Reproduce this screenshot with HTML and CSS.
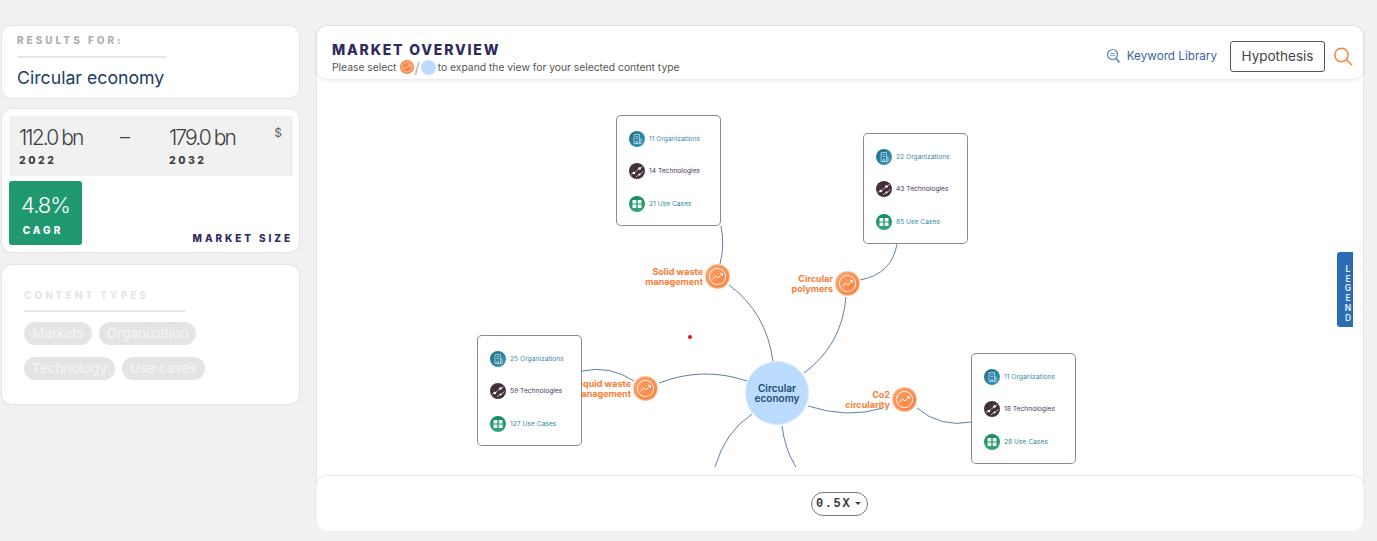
FILE: index.html
```html
<!DOCTYPE html>
<html lang="en">
  <head>
    <meta charset="UTF-8" />
    <meta name="viewport" content="width=device-width, initial-scale=1.0" />
    <title>Market Overview</title>
    <link rel="stylesheet" href="styles.css">
  </head>
  <body>
    <svg class="defs" width="0" height="0">
      <symbol id="trend" viewBox="0 0 24 24">
        <circle cx="12" cy="12" r="8.5" fill="none" stroke="#fff" stroke-width="1"/>
        <path d="M6.5 15 L10 11.5 L12.5 13.5 L17 9 M14.5 8.8 H17.2 V11.5" fill="none" stroke="#fff" stroke-width="1"/>
      </symbol>
      <symbol id="org" viewBox="0 0 16 16">
        <path d="M5 3.5 H10.5 V12.5 H5 Z M6.5 5.5 H9 M6.5 7.5 H9 M10.5 8 H12 V12.5 H10.5 M7 12.5 V10.5 H8.5 V12.5" fill="none" stroke="#cfe8f0" stroke-width=".7"/>
      </symbol>
      <symbol id="tech" viewBox="0 0 16 16">
        <path d="M2 11.5 C4 9.5 5.5 10.5 7 8.5 C8.5 6.5 10 6 13.5 3.5 M7 14 C9 11.5 11 12 14.5 8.5" fill="none" stroke="#e6dfe6" stroke-width=".8"/>
        <circle cx="4.8" cy="10" r="1.3" fill="#fff"/>
        <circle cx="10.5" cy="5.5" r="1.3" fill="#fff"/>
        <circle cx="10.5" cy="11.5" r="1" fill="#fff"/>
      </symbol>
      <symbol id="cases" viewBox="0 0 16 16">
        <path d="M3.5 4 H7.3 V7.4 H3.5 Z M8.7 4 H12.5 V7.4 H8.7 Z M3.5 8.6 H7.3 V12 H3.5 Z M8.7 8.6 H12.5 V12 H8.7 Z" fill="#f2fbf7"/>
      </symbol>
    </svg>

    <div class="sidebar">
      <div class="card results-card">
        <div class="eyebrow">RESULTS FOR:</div>
        <div class="results-term">Circular economy</div>
      </div>

      <div class="card market-card">
        <div class="size-band">
          <div>
            <div class="size-value">112.0 bn</div>
            <div class="size-year">2022</div>
          </div>
          <div class="size-dash">–</div>
          <div>
            <div class="size-value">179.0 bn</div>
            <div class="size-year">2032</div>
          </div>
          <div class="size-unit">$</div>
        </div>
        <div class="size-bottom">
          <div class="cagr">
            <div class="cagr-value">4.8%</div>
            <div class="cagr-label">CAGR</div>
          </div>
          <div class="market-label">MARKET SIZE</div>
        </div>
      </div>

      <div class="card types-card">
        <div class="types-title">CONTENT TYPES</div>
        <div class="chips">
          <span class="chip">Markets</span>
          <span class="chip">Organization</span>
          <span class="chip">Technology</span>
          <span class="chip">Use cases</span>
        </div>
      </div>
    </div>

    <div class="main">
      <div class="main-header">
        <div>
          <div class="main-title">MARKET OVERVIEW</div>
          <div class="main-sub">
            Please select
            <svg class="mini-topic" viewBox="0 0 24 24"><use href="#trend"/></svg>
            <span class="mini-slash">/</span>
            <span class="mini-center"></span>
            to expand the view for your selected content type
          </div>
        </div>
        <div class="header-tools">
          <a class="keyword-link">
            <svg width="15" height="16" viewBox="0 0 15 16">
              <circle cx="6.5" cy="6.5" r="5" fill="none" stroke="#5b86bd" stroke-width="1.2"/>
              <path d="M4 5.5 H9 M4 7.5 H9" stroke="#8fa9cc" stroke-width="1"/>
              <path d="M10 10.5 L13.5 14.5" stroke="#5b86bd" stroke-width="1.6"/>
            </svg>
            Keyword Library
          </a>
          <button class="hypothesis-btn">Hypothesis</button>
          <svg class="search-icon" width="20" height="20" viewBox="0 0 20 20">
            <circle cx="8.5" cy="8" r="6.7" fill="none" stroke="#f58439" stroke-width="1.5"/>
            <path d="M13.5 12.8 L19 18.2" stroke="#f58439" stroke-width="1.5"/>
          </svg>
        </div>
      </div>

      <div class="map">
        <svg class="links" viewBox="317 79 1046 397" width="1046" height="397">
          <path d="M721 226 Q725 245 720 264"/>
          <path d="M729 285 Q766 312 773 361"/>
          <path d="M846 297 Q842 345 804 373"/>
          <path d="M860 280 Q892 274 897 244"/>
          <path d="M659 383 Q703 366 747 381"/>
          <path d="M582 371 Q610 365 634 381"/>
          <path d="M808 406 Q848 419 883 408"/>
          <path d="M917 408 Q940 428 972 422"/>
          <path d="M752 414 Q725 432 715 467"/>
          <path d="M782 426 Q785 450 796 467"/>
        </svg>

        <div class="topic topic-solid">
          <span class="topic-label">Solid waste<br>management</span>
          <span class="topic-dot"><svg viewBox="0 0 24 24"><use href="#trend"/></svg></span>
        </div>
        <div class="topic topic-polymers">
          <span class="topic-label">Circular<br>polymers</span>
          <span class="topic-dot"><svg viewBox="0 0 24 24"><use href="#trend"/></svg></span>
        </div>
        <div class="topic topic-liquid">
          <span class="topic-label">Liquid waste<br>management</span>
          <span class="topic-dot"><svg viewBox="0 0 24 24"><use href="#trend"/></svg></span>
        </div>
        <div class="topic topic-co2">
          <span class="topic-label">Co2<br>circularity</span>
          <span class="topic-dot"><svg viewBox="0 0 24 24"><use href="#trend"/></svg></span>
        </div>

        <div class="center-node">Circular economy</div>
        <div class="red-dot"></div>

        <div class="stat-box box-solid">
          <div class="stat-row stat-org"><svg class="stat-icon"><use href="#org"/></svg>11 Organizations</div>
          <div class="stat-row stat-tech"><svg class="stat-icon"><use href="#tech"/></svg>14 Technologies</div>
          <div class="stat-row stat-cases"><svg class="stat-icon"><use href="#cases"/></svg>21 Use Cases</div>
        </div>
        <div class="stat-box box-polymers">
          <div class="stat-row stat-org"><svg class="stat-icon"><use href="#org"/></svg>22 Organizations</div>
          <div class="stat-row stat-tech"><svg class="stat-icon"><use href="#tech"/></svg>43 Technologies</div>
          <div class="stat-row stat-cases"><svg class="stat-icon"><use href="#cases"/></svg>85 Use Cases</div>
        </div>
        <div class="stat-box box-liquid">
          <div class="stat-row stat-org"><svg class="stat-icon"><use href="#org"/></svg>25 Organizations</div>
          <div class="stat-row stat-tech"><svg class="stat-icon"><use href="#tech"/></svg>59 Technologies</div>
          <div class="stat-row stat-cases"><svg class="stat-icon"><use href="#cases"/></svg>127 Use Cases</div>
        </div>
        <div class="stat-box box-co2">
          <div class="stat-row stat-org"><svg class="stat-icon"><use href="#org"/></svg>11 Organizations</div>
          <div class="stat-row stat-tech"><svg class="stat-icon"><use href="#tech"/></svg>18 Technologies</div>
          <div class="stat-row stat-cases"><svg class="stat-icon"><use href="#cases"/></svg>28 Use Cases</div>
        </div>

        <div class="legend-tab">LEGEND</div>
      </div>

      <div class="main-footer">
        <div class="zoom-select">0.5X<span class="zoom-caret"></span></div>
      </div>
    </div>
  </body>
</html>
```

FILE: styles.css
```css
html, body {
  height: 100%;
}

body {
  margin: 0;
  height: 541px;
  box-sizing: border-box;
  padding: 26px 14px 10px 2px;
  display: flex;
  gap: 18px;
  overflow: hidden;
  background: #f1f1f1;
  font-family: Inter, "Open Sans", sans-serif;
}

.defs {
  position: absolute;
}

.sidebar {
  width: 297px;
  flex: none;
}

.card {
  background: #fff;
  border-radius: 10px;
  box-shadow: 0 0 0 1px #e6e6e6;
}

/* results */
.results-card {
  height: 72px;
  box-sizing: border-box;
  padding: 8px 15px 0;
  margin-bottom: 11px;
}

.eyebrow {
  width: 149px;
  height: 22px;
  border-bottom: 2px solid #e6e6e6;
  font-size: 10px;
  font-weight: 800;
  letter-spacing: 3px;
  color: #b0b0b0;
}

.results-term {
  margin-top: 9px;
  font-size: 17.7px;
  color: #1d3b63;
}

/* market size */
.market-card {
  height: 143px;
  box-sizing: border-box;
  padding: 7px 6px 7px 7px;
  margin-bottom: 13px;
}

.size-band {
  height: 60px;
  box-sizing: border-box;
  padding: 9px 11px 0 10px;
  display: grid;
  grid-template-columns: 101px 49px 1fr auto;
  background: #f1f1f1;
  color: #3f3f3f;
}

.size-value {
  font-size: 21px;
  font-weight: 300;
  letter-spacing: -1.9px;
  line-height: 25px;
}

.size-year {
  margin-top: 4px;
  font-size: 10.5px;
  font-weight: 800;
  letter-spacing: 2.5px;
}

.size-dash {
  font-size: 20px;
  font-weight: 300;
  line-height: 25px;
}

.size-unit {
  font-size: 12px;
  color: #666;
}

.size-bottom {
  margin-top: 5px;
  display: flex;
  justify-content: space-between;
  align-items: flex-end;
}

.cagr {
  width: 73px;
  height: 64px;
  box-sizing: border-box;
  padding-top: 11px;
  text-align: center;
  border-radius: 3px;
  background: #219970;
  color: #fff;
}

.cagr-value {
  font-size: 22px;
  font-weight: 300;
  letter-spacing: -1px;
  line-height: 26px;
}

.cagr-label {
  margin-top: 6px;
  padding-right: 5px;
  font-size: 10px;
  font-weight: 800;
  letter-spacing: 3px;
}

.market-label {
  padding-bottom: 1px;
  font-size: 10px;
  font-weight: 800;
  letter-spacing: 2.9px;
  color: #2f2a5e;
}

/* content types */
.types-card {
  height: 139px;
  box-sizing: border-box;
  padding: 24px 22px 0;
}

.types-title {
  width: 161px;
  height: 21px;
  border-bottom: 2px solid #e6e6e6;
  font-size: 10px;
  font-weight: 800;
  letter-spacing: 3px;
  color: #e6e6e6;
}

.chips {
  width: 186px;
  margin-top: 10px;
  display: flex;
  flex-wrap: wrap;
  gap: 12px 7px;
}

.chip {
  height: 23px;
  padding: 0 8px;
  border-radius: 12px;
  background: #e4e4e4;
  color: #f6f6f6;
  font-size: 13.6px;
  line-height: 23px;
}

/* main panel */
.main {
  width: 1046px;
  height: 505px;
  flex: none;
  display: flex;
  flex-direction: column;
  border-radius: 10px;
  background: #fff;
  box-shadow: 0 0 0 1px #e6e6e6;
}

.main-header {
  position: relative;
  z-index: 2;
  height: 53px;
  flex: none;
  box-sizing: border-box;
  padding: 15px 10px 0 15px;
  display: flex;
  justify-content: space-between;
  border-radius: 10px;
  background: #fff;
  box-shadow: 0 1px 4px rgba(0, 0, 0, 0.12);
}

.main-title {
  font-size: 14px;
  font-weight: 800;
  letter-spacing: 1.8px;
  line-height: 18px;
  color: #2f2a5e;
}

.main-sub {
  display: flex;
  align-items: center;
  height: 14px;
  margin-top: 1px;
  font-size: 10.3px;
  color: #555;
}

.mini-topic {
  width: 14px;
  height: 14px;
  margin-left: 4px;
  border-radius: 50%;
  background: #f8853f;
}

.mini-slash {
  font-size: 15px;
  font-weight: 300;
  color: #999;
}

.mini-center {
  width: 15px;
  height: 15px;
  margin: 0 2px 0 1px;
  border-radius: 50%;
  background: #bbdcff;
}

.header-tools {
  display: flex;
  align-items: flex-start;
}

.keyword-link {
  display: flex;
  align-items: center;
  gap: 6px;
  height: 32px;
  margin-top: -1px;
  margin-right: 13px;
  font-size: 11.7px;
  color: #3a5fa8;
}

.hypothesis-btn {
  width: 95px;
  height: 31px;
  padding: 0 0 2px;
  border: 1px solid #555;
  border-radius: 3px;
  background: #fff;
  color: #444;
  font-family: inherit;
  font-size: 13.5px;
}

.search-icon {
  margin: 6px 0 0 8px;
}

/* map canvas */
.map {
  position: relative;
  flex: 1;
  overflow: hidden;
}

.links {
  position: absolute;
  left: 0;
  top: 0;
}

.links path {
  fill: none;
  stroke: #5f82a5;
  stroke-width: 1;
}

.topic {
  position: absolute;
  width: 100px;
  display: flex;
  justify-content: flex-end;
  align-items: center;
  gap: 2px;
}

.topic-solid { left: 313px; top: 185px; }
.topic-polymers { left: 443px; top: 192px; }
.topic-liquid { left: 241px; top: 297px; }
.topic-co2 { left: 500px; top: 308px; }

.topic-label {
  flex: none;
  text-align: right;
  font-size: 9px;
  font-weight: 700;
  line-height: 9.5px;
  color: #fb7d33;
}

.topic-dot {
  width: 25px;
  height: 25px;
  flex: none;
  box-sizing: border-box;
  border: 1px solid #ffb88c;
  border-radius: 50%;
  background: linear-gradient(135deg, #ffa268, #fb7f3d);
}

.topic-dot svg {
  display: block;
  width: 23px;
  height: 23px;
}

.center-node {
  position: absolute;
  left: 428px;
  top: 282px;
  width: 64px;
  height: 64px;
  box-sizing: border-box;
  padding: 0 8px;
  display: flex;
  align-items: center;
  justify-content: center;
  text-align: center;
  border: 1px solid #d7eaff;
  border-radius: 50%;
  background: #bbdcff;
  color: #1d4a70;
  font-size: 10px;
  font-weight: 600;
  line-height: 10.5px;
}

.red-dot {
  position: absolute;
  left: 371px;
  top: 256px;
  width: 4px;
  height: 4px;
  border-radius: 50%;
  background: #e01020;
}

.stat-box {
  position: absolute;
  z-index: 1;
  width: 105px;
  height: 111px;
  box-sizing: border-box;
  padding: 14.5px 0 0 12px;
  display: flex;
  flex-direction: column;
  gap: 16.5px;
  border: 1px solid transparent;
  border-radius: 5px;
  background:
    linear-gradient(#fff, #fff) padding-box,
    radial-gradient(circle at 0 0, #e88a52 2px, transparent 3px) border-box,
    radial-gradient(circle at 100% 0, #e88a52 2px, transparent 3px) border-box,
    radial-gradient(circle at 0 100%, #e88a52 2px, transparent 3px) border-box,
    radial-gradient(circle at 100% 100%, #e88a52 2px, transparent 3px) border-box,
    #8a8a8a border-box;
}

.box-solid { left: 299px; top: 36px; }
.box-polymers { left: 546px; top: 54px; }
.box-liquid { left: 160px; top: 256px; }
.box-co2 { left: 654px; top: 274px; }

.stat-row {
  display: flex;
  align-items: center;
  gap: 4px;
  height: 16px;
  font-size: 6.7px;
  white-space: nowrap;
}

.stat-icon {
  width: 16px;
  height: 16px;
  flex: none;
  border-radius: 50%;
}

.stat-org { color: #3a8ea8; }
.stat-org .stat-icon { background: linear-gradient(135deg, #1a6a8a, #3f9db6); }
.stat-tech { color: #4a3a5e; }
.stat-tech .stat-icon { background: #43303c; }
.stat-cases { color: #2f8a9a; }
.stat-cases .stat-icon { background: linear-gradient(#158a5c, #3aa57c); }

.legend-tab {
  position: absolute;
  left: 1020px;
  top: 173px;
  width: 16px;
  height: 75px;
  box-sizing: border-box;
  padding-top: 7px;
  display: flex;
  justify-content: center;
  writing-mode: vertical-rl;
  text-orientation: upright;
  border-radius: 3px 0 0 3px;
  background: #2a6db5;
  color: #e8f0fa;
  font-size: 8.5px;
  font-weight: 600;
  letter-spacing: -0.3px;
}

/* footer */
.main-footer {
  position: relative;
  z-index: 2;
  height: 55px;
  flex: none;
  display: flex;
  justify-content: center;
  align-items: center;
  border-radius: 10px;
  background: #fff;
  box-shadow: 0 0 0 1px #eeeeee;
}

.zoom-select {
  width: 57px;
  height: 24px;
  box-sizing: border-box;
  margin-right: 1px;
  padding-left: 4px;
  display: flex;
  align-items: center;
  border: 1px solid #777;
  border-radius: 12px;
  color: #3a3a3a;
  font-family: "Liberation Mono", monospace;
  font-size: 12px;
  font-weight: 700;
  letter-spacing: 1.6px;
}

.zoom-caret {
  width: 0;
  height: 0;
  margin-left: 4px;
  border-left: 3px solid transparent;
  border-right: 3px solid transparent;
  border-top: 3px solid #444;
}
```
